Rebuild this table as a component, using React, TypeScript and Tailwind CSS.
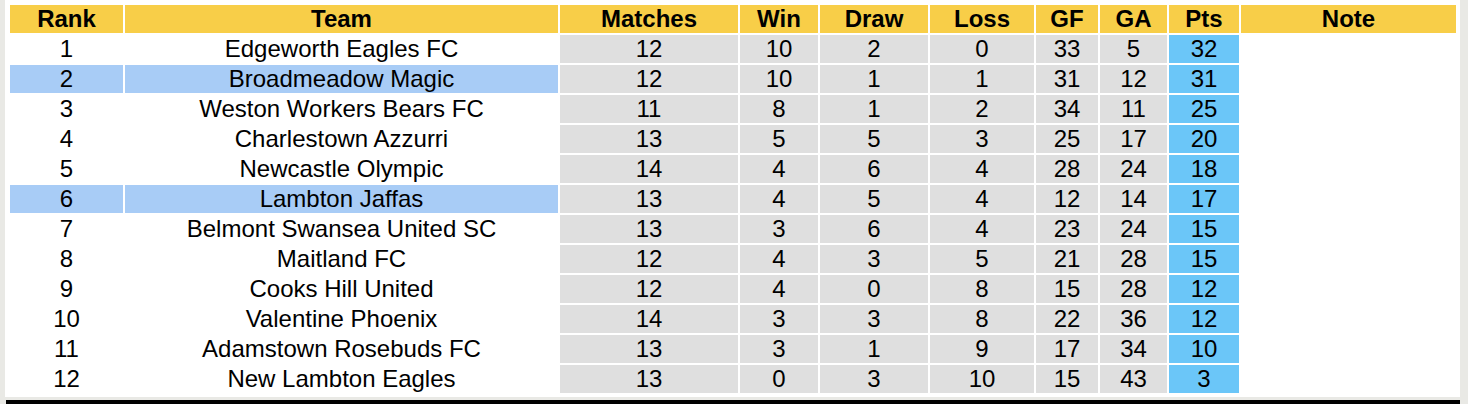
const rows = [
  { rank: 1, team: "Edgeworth Eagles FC", m: 12, w: 10, d: 2, l: 0, gf: 33, ga: 5, pts: 32 },
  { rank: 2, team: "Broadmeadow Magic", m: 12, w: 10, d: 1, l: 1, gf: 31, ga: 12, pts: 31, hl: true },
  { rank: 3, team: "Weston Workers Bears FC", m: 11, w: 8, d: 1, l: 2, gf: 34, ga: 11, pts: 25 },
  { rank: 4, team: "Charlestown Azzurri", m: 13, w: 5, d: 5, l: 3, gf: 25, ga: 17, pts: 20 },
  { rank: 5, team: "Newcastle Olympic", m: 14, w: 4, d: 6, l: 4, gf: 28, ga: 24, pts: 18 },
  { rank: 6, team: "Lambton Jaffas", m: 13, w: 4, d: 5, l: 4, gf: 12, ga: 14, pts: 17, hl: true },
  { rank: 7, team: "Belmont Swansea United SC", m: 13, w: 3, d: 6, l: 4, gf: 23, ga: 24, pts: 15 },
  { rank: 8, team: "Maitland FC", m: 12, w: 4, d: 3, l: 5, gf: 21, ga: 28, pts: 15 },
  { rank: 9, team: "Cooks Hill United", m: 12, w: 4, d: 0, l: 8, gf: 15, ga: 28, pts: 12 },
  { rank: 10, team: "Valentine Phoenix", m: 14, w: 3, d: 3, l: 8, gf: 22, ga: 36, pts: 12 },
  { rank: 11, team: "Adamstown Rosebuds FC", m: 13, w: 3, d: 1, l: 9, gf: 17, ga: 34, pts: 10 },
  { rank: 12, team: "New Lambton Eagles", m: 13, w: 0, d: 3, l: 10, gf: 15, ga: 43, pts: 3 },
]

const headers = ["Rank", "Team", "Matches", "Win", "Draw", "Loss", "GF", "GA", "Pts", "Note"]
const widths = [113, 433, 178, 78, 108, 104, 62, 67, 70, 215]

export default function App() {
  return (
    <div className="h-[404px] w-full bg-[#e9e9e5] font-['Liberation_Sans',Arial,sans-serif] text-black">
      <div className="ml-[5px] h-[397px] w-[1455px] bg-white pl-[3px] pt-[3px]">
        <table className="table-fixed border-separate border-spacing-[2px] text-[24px] leading-none">
          <colgroup>
            {widths.map((w, i) => (
              <col key={i} style={{ width: w }} />
            ))}
          </colgroup>
          <thead>
            <tr>
              {headers.map((h) => (
                <th key={h} className="h-[28px] bg-[#f8ce48] p-0 text-center font-bold">
                  {h}
                </th>
              ))}
            </tr>
          </thead>
          <tbody>
            {rows.map((r) => {
              const side = r.hl ? "bg-[#a8ccf6]" : "bg-white"
              return (
                <tr key={r.rank}>
                  <td className={`h-[28px] p-0 text-center ${side}`}>{r.rank}</td>
                  <td className={`p-0 text-center ${side}`}>{r.team}</td>
                  <td className="bg-[#dfdfdf] p-0 text-center">{r.m}</td>
                  <td className="bg-[#dfdfdf] p-0 text-center">{r.w}</td>
                  <td className="bg-[#dfdfdf] p-0 text-center">{r.d}</td>
                  <td className="bg-[#dfdfdf] p-0 text-center">{r.l}</td>
                  <td className="bg-[#dfdfdf] p-0 text-center">{r.gf}</td>
                  <td className="bg-[#dfdfdf] p-0 text-center">{r.ga}</td>
                  <td className="bg-[#6bc6f8] p-0 text-center">{r.pts}</td>
                  <td className="bg-white p-0"></td>
                </tr>
              )
            })}
          </tbody>
        </table>
      </div>
      <div className="ml-[6px] mt-[3px] h-[4px] w-[1454px] bg-black" />
    </div>
  )
}
